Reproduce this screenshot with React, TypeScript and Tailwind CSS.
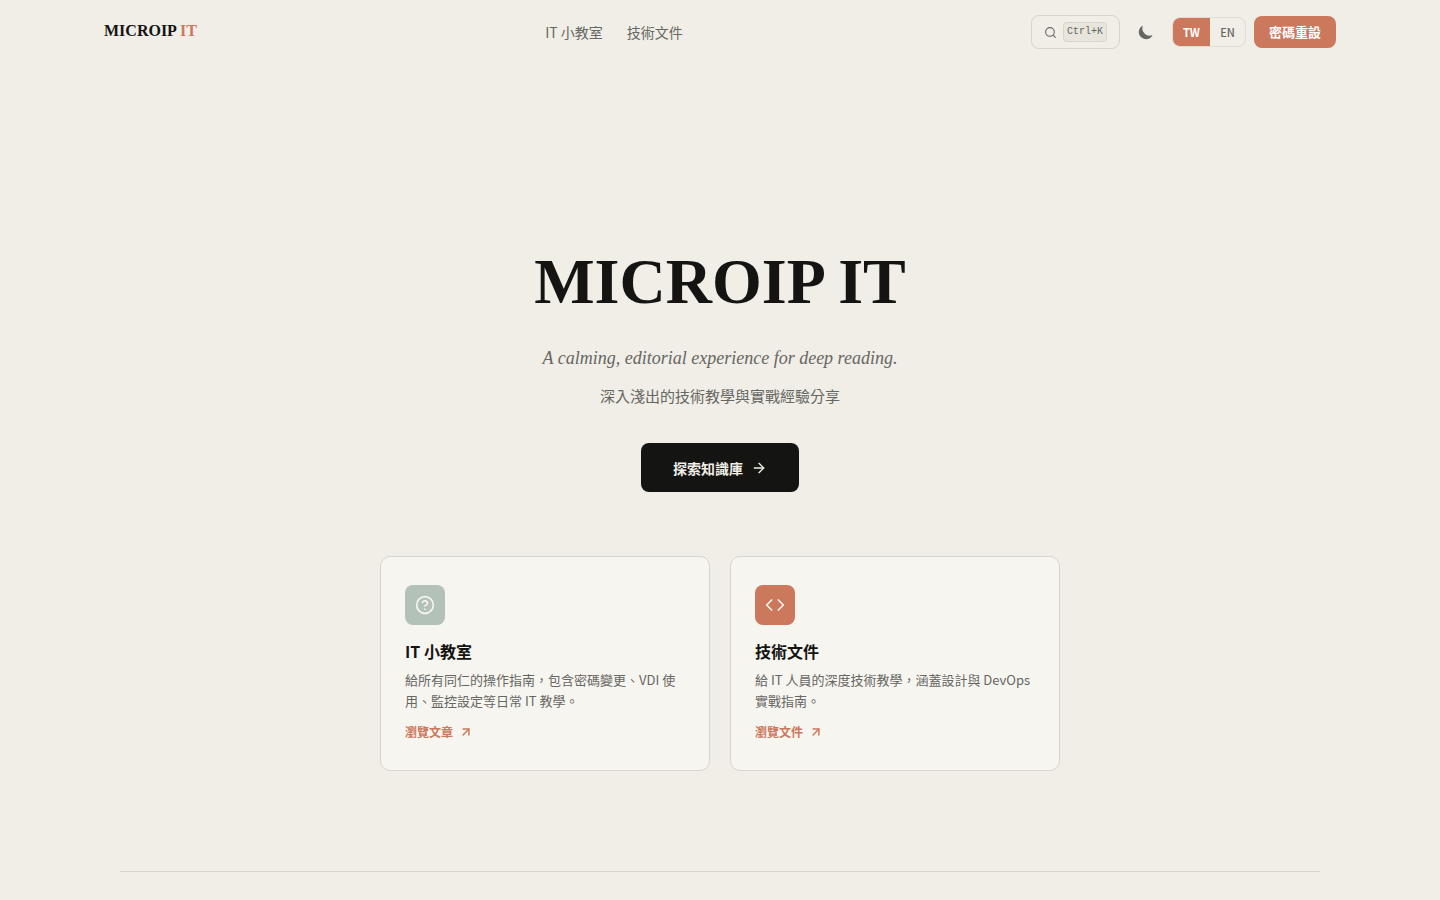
import type { ReactNode } from "react";
import { ArrowRight, ArrowUpRight, CircleHelp, Code, Search } from "lucide-react";

type Card = {
  title: string;
  text: string;
  link: string;
  href: string;
  tile: string;
  icon: ReactNode;
};

const cards: Card[] = [
  {
    title: "IT 小教室",
    text: "給所有同仁的操作指南，包含密碼變更、VDI 使用、監控設定等日常 IT 教學。",
    link: "瀏覽文章",
    href: "#classroom",
    tile: "bg-[#b2c2b8]",
    icon: <CircleHelp size={20} strokeWidth={2} />,
  },
  {
    title: "技術文件",
    text: "給 IT 人員的深度技術教學，涵蓋設計與 DevOps 實戰指南。",
    link: "瀏覽文件",
    href: "#docs",
    tile: "bg-[#cc785c]",
    icon: <Code size={20} strokeWidth={2} />,
  },
];

function Header() {
  return (
    <header className="mx-auto flex h-16 w-full max-w-[1280px] items-center justify-between px-6">
      <a
        href="#home"
        className="pb-0.5 font-['Liberation_Serif',serif] text-base leading-6 font-bold text-[#141413]"
      >
        MICROIP <span className="text-[#cc785c]">IT</span>
      </a>
      <nav className="flex gap-6 text-sm leading-5 text-[#666663]">
        <a href="#classroom">IT 小教室</a>
        <a href="#docs">技術文件</a>
      </nav>
      <div className="flex items-center gap-2">
        <button
          type="button"
          aria-label="搜尋"
          className="flex h-[34px] items-center gap-1.5 rounded-lg border border-[#d6d4cb] px-3 text-[#666663]"
        >
          <Search size={13} strokeWidth={2} />
          <kbd className="flex h-5 items-center rounded-sm border border-[#d6d4cb] bg-[#e8e6dc] px-[3px] font-['Liberation_Mono',monospace] text-[10px] leading-4 text-[#666663]">
            Ctrl+K
          </kbd>
        </button>
        <button
          type="button"
          aria-label="切換深色模式"
          className="flex size-9 items-center justify-center text-[#666663]"
        >
          <svg viewBox="0 0 20 20" className="size-[18px]" fill="currentColor">
            <path d="M17.293 13.293A8 8 0 016.707 2.707a8.001 8.001 0 1010.586 10.586z" />
          </svg>
        </button>
        <div className="flex h-[30px] overflow-hidden rounded-lg border border-[#dedcd3] text-[11px] leading-4">
          <button type="button" className="w-[37px] bg-[#cc785c] font-bold text-white">
            TW
          </button>
          <button type="button" className="w-[35px] font-medium text-[#666663]">
            EN
          </button>
        </div>
        <a
          href="#reset"
          className="flex h-8 items-center rounded-lg bg-[#cc785c] px-[15px] text-[13px] leading-5 font-bold text-white"
        >
          密碼重設
        </a>
      </div>
    </header>
  );
}

export default function App() {
  return (
    <div
      lang="zh-TW"
      className="min-h-screen bg-[#f0eee6] font-['Noto_Sans_CJK_TC',sans-serif] text-[#141413]"
    >
      <Header />
      <main className="px-6">
        <section className="mx-auto flex max-w-[1200px] flex-col items-center border-b border-[#d6d4cb] pt-[180px] pb-[100px]">
          <h1 className="text-center font-['Liberation_Serif',serif] text-[64px] leading-[76px] font-bold">
            MICROIP IT
          </h1>
          <p className="mt-6 text-center font-['Liberation_Serif',serif] text-lg leading-7 text-[#666663] italic">
            A calming, editorial experience for deep reading.
          </p>
          <p className="mt-3 text-center text-[15px] leading-6 text-[#666663]">
            深入淺出的技術教學與實戰經驗分享
          </p>
          <a
            href="#explore"
            className="mt-[35px] flex h-[49px] items-center gap-2 rounded-lg bg-[#141413] px-8 text-sm leading-5 font-bold text-[#f0eee6]"
          >
            探索知識庫
            <ArrowRight size={16} strokeWidth={2} />
          </a>
          <div className="mt-16 grid w-full max-w-[680px] grid-cols-1 gap-5 sm:grid-cols-2">
            {cards.map((card) => (
              <article
                key={card.title}
                className="rounded-[10px] border border-[#d6d4cb] bg-[#f6f5ef] px-6 py-7"
              >
                <div
                  className={`flex size-10 items-center justify-center rounded-lg text-[#f6f5ef] ${card.tile}`}
                >
                  {card.icon}
                </div>
                <h2 className="mt-3.5 text-base leading-6 font-bold">{card.title}</h2>
                <p className="mt-1.5 text-[13px] leading-[21px] text-[#666663]">{card.text}</p>
                <a
                  href={card.href}
                  className="mt-[11px] flex items-center gap-1.5 text-xs leading-5 font-bold text-[#cc785c]"
                >
                  {card.link}
                  <ArrowUpRight size={14} strokeWidth={2.5} />
                </a>
              </article>
            ))}
          </div>
        </section>
      </main>
    </div>
  );
}
